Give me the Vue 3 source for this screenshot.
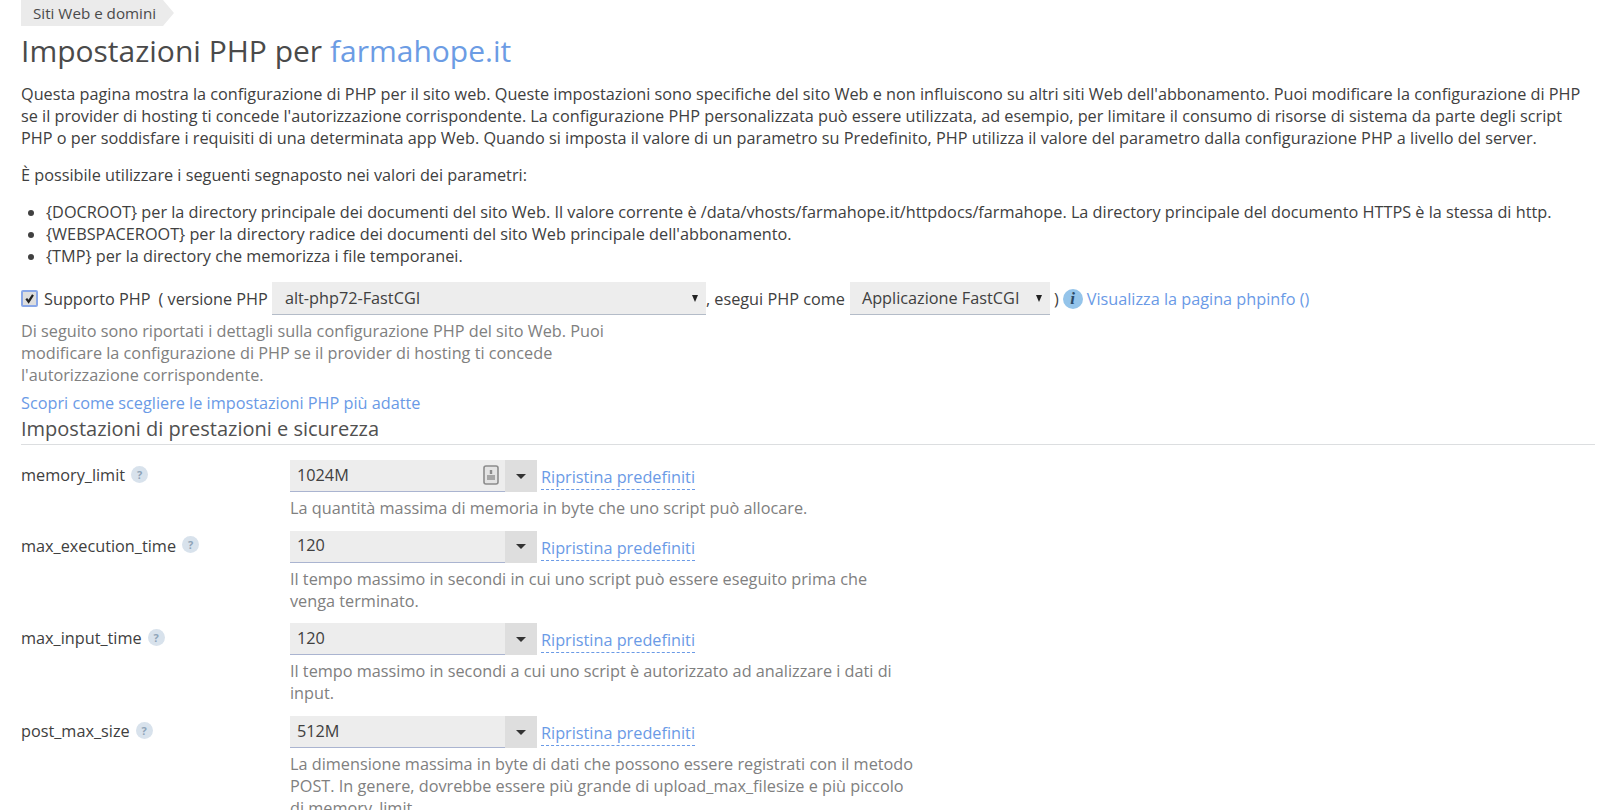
<script setup>
const bullets = [
  "{DOCROOT} per la directory principale dei documenti del sito Web. Il valore corrente è /data/vhosts/farmahope.it/httpdocs/farmahope. La directory principale del documento HTTPS è la stessa di http.",
  "{WEBSPACEROOT} per la directory radice dei documenti del sito Web principale dell'abbonamento.",
  "{TMP} per la directory che memorizza i file temporanei."
];
const rows = [
  { name: "memory_limit", value: "1024M", icon: true, hint: "La quantità massima di memoria in byte che uno script può allocare." },
  { name: "max_execution_time", value: "120", hint: "Il tempo massimo in secondi in cui uno script può essere eseguito prima che venga terminato." },
  { name: "max_input_time", value: "120", hint: "Il tempo massimo in secondi a cui uno script è autorizzato ad analizzare i dati di input." },
  { name: "post_max_size", value: "512M", hint: "La dimensione massima in byte di dati che possono essere registrati con il metodo POST. In genere, dovrebbe essere più grande di upload_max_filesize e più piccolo di memory_limit." }
];
</script>

<template>
  <div class="page">
    <div class="crumb">Siti Web e domini</div>
    <h1 class="title">Impostazioni PHP per <a class="domain">farmahope.it</a></h1>
    <p class="intro">Questa pagina mostra la configurazione di PHP per il sito web. Queste impostazioni sono specifiche del sito Web e non influiscono su altri siti Web dell'abbonamento. Puoi modificare la configurazione di PHP se il provider di hosting ti concede l'autorizzazione corrispondente. La configurazione PHP personalizzata può essere utilizzata, ad esempio, per limitare il consumo di risorse di sistema da parte degli script PHP o per soddisfare i requisiti di una determinata app Web. Quando si imposta il valore di un parametro su Predefinito, PHP utilizza il valore del parametro dalla configurazione PHP a livello del server.</p>
    <p class="lead">È possibile utilizzare i seguenti segnaposto nei valori dei parametri:</p>
    <ul class="bullets">
      <li v-for="b in bullets" :key="b">{{ b }}</li>
    </ul>

    <div class="support">
      <span class="check">
        <svg width="11" height="11" viewBox="0 0 12 12"><path d="M2.5 6.2 5 9.5 9.8 2" fill="none" stroke="#222" stroke-width="2.4"/></svg>
      </span>
      <span class="lbl">Supporto PHP</span>
      <span class="lbl paren">( versione PHP</span>
      <div class="sel sel-ver"><span>alt-php72-FastCGI</span><i class="tri"></i></div>
      <span class="lbl comma">, esegui PHP come</span>
      <div class="sel sel-run"><span>Applicazione FastCGI</span><i class="tri"></i></div>
      <span class="lbl close">)</span>
      <span class="info">i</span>
      <a class="link">Visualizza la pagina phpinfo ()</a>
    </div>

    <p class="desc">Di seguito sono riportati i dettagli sulla configurazione PHP del sito Web. Puoi modificare la configurazione di PHP se il provider di hosting ti concede l'autorizzazione corrispondente.</p>
    <a class="link learn">Scopri come scegliere le impostazioni PHP più adatte</a>
    <h2 class="section">Impostazioni di prestazioni e sicurezza</h2>

    <div v-for="r in rows" :key="r.name" class="row">
      <div class="name">{{ r.name }}<span class="q">?</span></div>
      <div class="field">
        <div class="ctrl">
          <div class="input">
            <span>{{ r.value }}</span>
            <svg v-if="r.icon" class="key" width="16" height="20" viewBox="0 0 16 20">
              <rect x="1" y="1" width="14" height="18" rx="2" fill="#e4e4e4" stroke="#8c8c8c" stroke-width="1.6"/>
              <path d="M8 5v4" stroke="#8c8c8c" stroke-width="2.4"/>
              <rect x="4" y="10" width="8" height="5" fill="#a6a6a6"/>
            </svg>
          </div>
          <div class="drop"><i class="caret"></i></div>
          <a class="reset">Ripristina predefiniti</a>
        </div>
        <div class="hint">{{ r.hint }}</div>
      </div>
    </div>
  </div>
</template>

<style>
html, body { margin: 0; height: 810px; overflow: hidden; background: #fff; }
</style>

<style scoped>
.page {
  padding: 0 14px 0 21px;
  height: 810px;
  overflow: hidden;
  box-sizing: border-box;
  font-family: "Open Sans", sans-serif;
  font-size: 16.25px;
  line-height: 22px;
  color: #404040;
}
.crumb {
  width: fit-content;
  height: 26px;
  line-height: 26px;
  padding: 0 7px 0 12px;
  background: #ebebeb;
  font-size: 15.2px;
  position: relative;
  color: #4a4a4a;
}
.crumb::after {
  content: "";
  position: absolute;
  left: 100%;
  top: 0;
  border-left: 11px solid #ebebeb;
  border-top: 13px solid transparent;
  border-bottom: 13px solid transparent;
}
.title {
  margin: 6px 0 0;
  font-size: 30px;
  line-height: 38px;
  font-weight: 400;
  color: #4a4a4a;
}
.domain { color: #6c9ce4; }
.intro { margin: 13px 0 0; }
.lead { margin: 15px 0 0; }
.bullets { margin: 15px 0 0; padding: 0 0 0 25px; }
.support { display: flex; align-items: center; margin-top: 15px; height: 33px; white-space: nowrap; }
.check {
  width: 13px; height: 13px;
  border: 2px solid #8aa8e8;
  border-radius: 2px;
  background: #dedede;
  display: flex; align-items: center; justify-content: center;
}
.lbl { margin-left: 6px; }
.paren { margin-left: 8px; }
.comma { margin-left: 0; }
.sel {
  background: #ededed;
  border-bottom: 1px solid #b4bcc8;
  display: flex; align-items: center; justify-content: space-between;
  box-sizing: border-box;
  height: 33px;
}
.sel-ver { width: 434px; margin-left: 4px; padding: 0 8px 0 13px; }
.sel-run { width: 200px; margin-left: 5px; padding: 0 8px 0 12px; }
.tri {
  width: 0; height: 0;
  border-left: 3.5px solid transparent;
  border-right: 3.5px solid transparent;
  border-top: 7px solid #222;
}
.close { margin-left: 4px; }
.info {
  width: 20px; height: 20px; border-radius: 50%;
  background: #94c4ea;
  margin: 0 4px 0 4px;
  text-align: center; line-height: 20px;
  font-family: "Liberation Serif", serif; font-style: italic; font-weight: 700; font-size: 17px;
  color: #2c4a66;
}
.link { color: #6a9ae6; }
.desc { margin: 5px 0 0; width: 600px; color: #808080; }
.learn { display: block; margin-top: 6px; line-height: 22px; }
.section {
  margin: 2px 0 0;
  font-size: 20px;
  line-height: 26px;
  padding-bottom: 2px;
  font-weight: 400;
  color: #505050;
  border-bottom: 1px solid #dcdee0;
}
.row { display: flex; margin-top: 15px; }
.row + .row { margin-top: 11.7px; }
.name { width: 269px; flex: none; line-height: 30px; display: flex; align-items: center; height: 30px; }
.q {
  width: 17px; height: 17px; border-radius: 50%;
  background: #d8e2ec; color: #8fa4b8;
  font-size: 11px; font-weight: 700; line-height: 17px; text-align: center;
  margin-left: 6px; margin-top: -2px;
}
.ctrl { display: flex; align-items: stretch; height: 32px; }
.input {
  width: 215px; box-sizing: border-box;
  background: #ededed;
  border-bottom: 1px solid #aab4d0;
  padding: 0 6px 2px 7px;
  display: flex; align-items: center; justify-content: space-between;
}
.drop { width: 32px; background: #dedede; display: flex; align-items: center; justify-content: center; }
.caret {
  width: 0; height: 0;
  border-left: 5px solid transparent;
  border-right: 5px solid transparent;
  border-top: 5px solid #333;
}
.reset {
  margin-left: 4px;
  align-self: flex-start;
  margin-top: 3px;
  height: 27px;
  line-height: 28px;
  box-sizing: border-box;
  color: #6a9ae6;
  border-bottom: 1px dashed #6a9ae6;
}
.field { width: 625px; }
.hint { margin-top: 5px; color: #808080; width: 625px; }
</style>
